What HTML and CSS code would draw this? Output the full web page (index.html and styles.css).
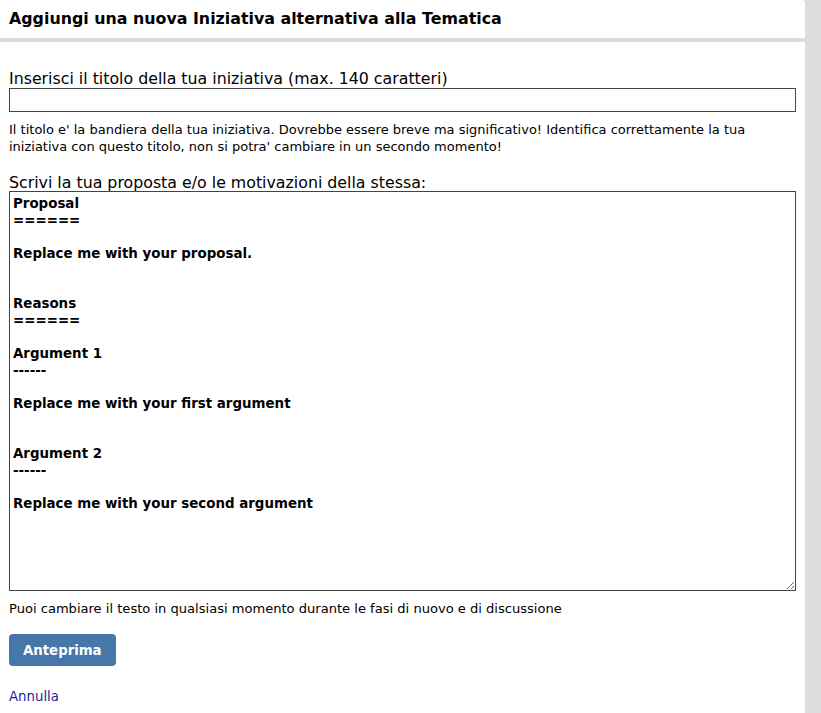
FILE: index.html
```html
<!DOCTYPE html>
<html lang="it">
<head>
<meta charset="utf-8">
<title>Nuova iniziativa</title>
<link rel="stylesheet" href="styles.css">
</head>
<body>
<div class="page">
  <div class="slot-head">
    <h1 class="title">Aggiungi una nuova Iniziativa alternativa alla Tematica</h1>
  </div>
  <div class="slot-main">
    <form class="form">
      <label class="label" for="name">Inserisci il titolo della tua iniziativa (max. 140 caratteri)</label>
      <input class="input" id="name" type="text">
      <p class="hint">Il titolo e' la bandiera della tua iniziativa. Dovrebbe essere breve ma significativo! Identifica correttamente la tua iniziativa con questo titolo, non si potra' cambiare in un secondo momento!</p>
      <label class="label" for="draft">Scrivi la tua proposta e/o le motivazioni della stessa:</label>
      <textarea class="textarea" id="draft">Proposal
======

Replace me with your proposal.


Reasons
======

Argument 1
------

Replace me with your first argument


Argument 2
------

Replace me with your second argument</textarea>
      <p class="note">Puoi cambiare il testo in qualsiasi momento durante le fasi di nuovo e di discussione</p>
      <button class="btn" type="button">Anteprima</button>
      <a class="cancel" href="#">Annulla</a>
    </form>
  </div>
</div>
</body>
</html>
```

FILE: styles.css
```css
html, body {
  margin: 0;
  padding: 0;
  background: #dddddd;
  font-family: "DejaVu Sans", Verdana, sans-serif;
  color: #000;
}

.page {
  width: 805px;
  min-height: 713px;
  display: flex;
  flex-direction: column;
}

.slot-head {
  background: #fff;
  height: 38px;
  margin-bottom: 4px;
  border-top-right-radius: 3px;
  box-sizing: border-box;
  padding: 10px 9px 0;
}

.title {
  margin: 0;
  font-size: 15.85px;
  font-weight: bold;
  line-height: 18px;
}

.slot-main {
  background: #fff;
  flex: 1;
  padding: 0 9px;
}

.form {
  display: flex;
  flex-direction: column;
  align-items: flex-start;
  padding-top: 28px;
}

.label {
  font-size: 15.8px;
  line-height: 17px;
}

.input {
  box-sizing: border-box;
  width: 787px;
  height: 24px;
  margin: 1px 0 0;
  border: 1px solid #444;
  padding: 2px 4px;
  font-family: inherit;
}

.hint {
  width: 787px;
  margin: 9px 0 19px;
  font-size: 13px;
  line-height: 17px;
}

.textarea {
  box-sizing: border-box;
  width: 787px;
  height: 400px;
  margin: 0;
  border: 1px solid #444;
  padding: 4px 3px;
  font-family: "DejaVu Sans", Verdana, sans-serif;
  font-weight: bold;
  font-size: 13.4px;
  line-height: 16.67px;
  color: #000;
  resize: both;
}

.note {
  margin: 9px 0 17px;
  font-size: 13.07px;
  line-height: 17px;
}

.btn {
  background: #4677a8;
  color: #fff;
  border: 0;
  border-radius: 4px;
  height: 32px;
  padding: 0 14px;
  font-family: inherit;
  font-weight: bold;
  font-size: 13.3px;
}

.cancel {
  margin-top: 23px;
  font-size: 13.3px;
  color: #24249a;
  text-decoration: none;
}
```
